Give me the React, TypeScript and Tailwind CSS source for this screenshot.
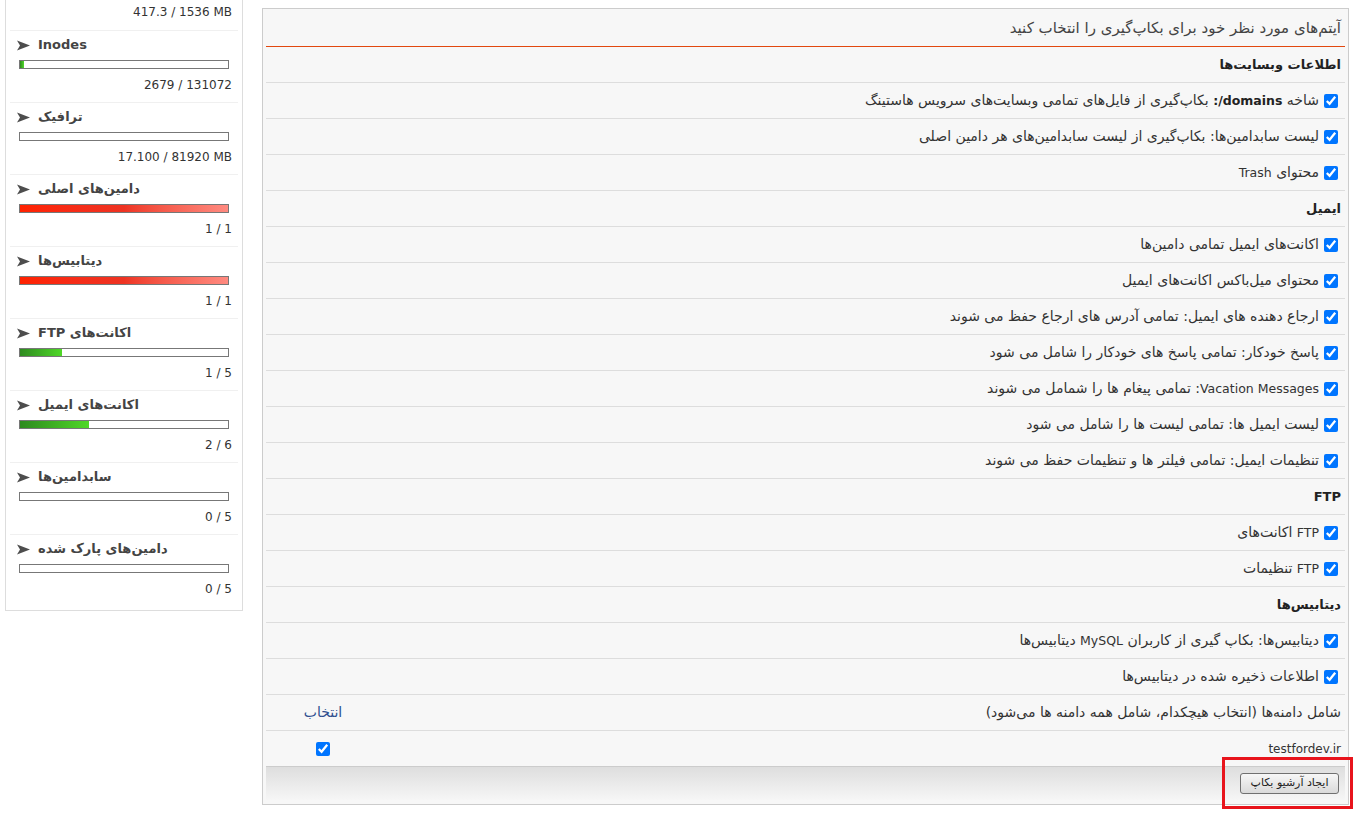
import React from "react";

type Usage = {
  label: string;
  value: string;
  used: number;
  max: number;
  latin?: boolean;
};

const usages: Usage[] = [
  { label: "Inodes", value: "2679 / 131072", used: 2679, max: 131072, latin: true },
  { label: "ترافیک", value: "17.100 / 81920 MB", used: 17.1, max: 81920 },
  { label: "دامین‌های اصلی", value: "1 / 1", used: 1, max: 1 },
  { label: "دیتابیس‌ها", value: "1 / 1", used: 1, max: 1 },
  { label: "اکانت‌های FTP", value: "1 / 5", used: 1, max: 5 },
  { label: "اکانت‌های ایمیل", value: "2 / 6", used: 2, max: 6 },
  { label: "سابدامین‌ها", value: "0 / 5", used: 0, max: 5 },
  { label: "دامین‌های پارک شده", value: "0 / 5", used: 0, max: 5 },
];

// latin words sit a bit smaller next to the persian text
const L = ({ children, bold }: { children: React.ReactNode; bold?: boolean }) => (
  <span className={`text-[12.5px] ${bold ? "font-bold text-[#222]" : ""}`}>{children}</span>
);

type Row =
  | { kind: "section"; text: React.ReactNode }
  | { kind: "check"; text: React.ReactNode };

const rows: Row[] = [
  { kind: "section", text: "اطلاعات وبسایت‌ها" },
  {
    kind: "check",
    text: (
      <>
        شاخه <L bold>domains/:</L> بکاپ‌گیری از فایل‌های تمامی وبسایت‌های سرویس هاستینگ
      </>
    ),
  },
  { kind: "check", text: "لیست سابدامین‌ها: بکاپ‌گیری از لیست سابدامین‌های هر دامین اصلی" },
  { kind: "check", text: <>محتوای <L>Trash</L></> },
  { kind: "section", text: "ایمیل" },
  { kind: "check", text: "اکانت‌های ایمیل تمامی دامین‌ها" },
  { kind: "check", text: "محتوای میل‌باکس اکانت‌های ایمیل" },
  { kind: "check", text: "ارجاع دهنده های ایمیل: تمامی آدرس های ارجاع حفظ می شوند" },
  { kind: "check", text: "پاسخ خودکار: تمامی پاسخ های خودکار را شامل می شود" },
  { kind: "check", text: <><L>Vacation Messages</L>: تمامی پیغام ها را شمامل می شوند</> },
  { kind: "check", text: "لیست ایمیل ها: تمامی لیست ها را شامل می شود" },
  { kind: "check", text: "تنظیمات ایمیل: تمامی فیلتر ها و تنظیمات حفظ می شوند" },
  { kind: "section", text: "FTP" },
  { kind: "check", text: <><L>FTP</L> اکانت‌های</> },
  { kind: "check", text: <><L>FTP</L> تنظیمات</> },
  { kind: "section", text: "دیتابیس‌ها" },
  { kind: "check", text: <>دیتابیس‌ها: بکاپ گیری از کاربران <L>MySQL</L> دیتابیس‌ها</> },
  { kind: "check", text: "اطلاعات ذخیره شده در دیتابیس‌ها" },
];

function Arrow() {
  return (
    <svg width="13" height="11" viewBox="0 0 13 11" className="shrink-0">
      <polygon points="0,0.5 13,5.5 0,10.5 3,5.5" fill="#4d4d4d" />
    </svg>
  );
}

function UsageBar({ used, max }: { used: number; max: number }) {
  const pct = Math.min(100, (used / max) * 100);
  const full = pct >= 100;
  return (
    <div className="mx-[9px] h-[9px] border border-[#777] bg-white">
      <div
        className={`h-full ${
          full
            ? "bg-gradient-to-r from-[#ff2200] via-[#ee3322] to-[#ff8a80]"
            : "bg-gradient-to-r from-[#2e8a1f] to-[#4fd827]"
        }`}
        style={{ width: `${pct}%` }}
      />
    </div>
  );
}

function Sidebar() {
  return (
    <div className="w-[238px] shrink-0 border-x border-b border-[#ddd] bg-white px-[4px] pb-[4px] text-[#333]">
      {/* tail of the disk usage item, scrolled above */}
      <div className="border-b border-[#f0f0f0] pt-[3px] pb-[9px]">
        <div className="h-[18px] pr-[6px] text-right text-[12px] leading-[18px]">417.3 / 1536 MB</div>
      </div>
      {usages.map((u, i) => (
        <div
          key={u.label}
          className={`pt-[4px] pb-[8px] ${i < usages.length - 1 ? "border-b border-[#f0f0f0]" : ""}`}
        >
          <div className="flex h-[20px] items-center gap-[8px] pl-[7px] text-[#444]">
            <Arrow />
            <span dir={u.latin ? "ltr" : "rtl"} className="text-[13px] font-bold">
              {u.label}
            </span>
          </div>
          <div className="mt-[5px]">
            <UsageBar used={u.used} max={u.max} />
          </div>
          <div className="mt-[7px] h-[18px] pr-[6px] text-right text-[12px] leading-[18px]">{u.value}</div>
        </div>
      ))}
    </div>
  );
}

function BackupPanel() {
  return (
    <div className="relative mt-[8px] w-[1087px] shrink-0 border border-[#ccc] bg-[#f7f7f7] px-[3px] pb-[4px]" dir="rtl">
      <div className="flex h-[38px] items-center border-b border-b-[#e2480f] pt-[2px] pr-[4px] text-[15px] text-[#444]">
        آیتم‌های مورد نظر خود برای بکاپ‌گیری را انتخاب کنید
      </div>

      {rows.map((r, i) =>
        r.kind === "section" ? (
          <div key={i} className="flex h-[36px] items-center border-b border-[#ddd] pr-[4px] text-[13px] font-bold text-[#222]">
            {r.text}
          </div>
        ) : (
          <label key={i} className="flex h-[36px] items-center border-b border-[#ddd] pr-[4px] text-[14px] text-[#333]">
            <input type="checkbox" defaultChecked className="m-0 ml-[5px] mr-[3px] h-[14px] w-[14px] accent-[#0075ff]" />
            <span>{r.text}</span>
          </label>
        )
      )}

      <div className="flex h-[36px] items-center border-b border-[#ddd] text-[14px] text-[#333]">
        <div className="flex-1 pr-[4px]">شامل دامنه‌ها (انتخاب هیچکدام، شامل همه دامنه ها می‌شود)</div>
        <div className="w-[114px] text-center text-[#2f4f8f]">انتخاب</div>
      </div>
      <div className="flex h-[36px] items-center border-b border-[#ccc] text-[12px] text-[#333]">
        <div className="flex-1 pr-[4px]" dir="ltr">
          <div className="text-right">testfordev.ir</div>
        </div>
        <div className="flex w-[114px] justify-center">
          <input type="checkbox" defaultChecked className="m-0 h-[14px] w-[14px] accent-[#0075ff]" />
        </div>
      </div>

      <div className="flex h-[33px] items-center bg-gradient-to-b from-[#dedede] to-[#f6f6f6] pr-[6px]">
        <button
          type="button"
          className="h-[21px] w-[99px] rounded-[3px] border border-[#707070] bg-gradient-to-b from-[#f7f7f7] to-[#dadada] text-[11px] text-[#222]"
        >
          ایجاد آرشیو بکاپ
        </button>
      </div>

      {/* annotation frame around the submit button */}
      <div className="pointer-events-none absolute bottom-[-5px] left-[959px] h-[52px] w-[131px] border-[3px] border-[#e8141c]" />
    </div>
  );
}

export default function App() {
  return (
    <div
      className="flex min-h-screen items-start gap-[19px] bg-white pl-[5px]"
      style={{ fontFamily: '"DejaVu Sans", "Liberation Sans", sans-serif' }}
    >
      <Sidebar />
      <BackupPanel />
    </div>
  );
}
